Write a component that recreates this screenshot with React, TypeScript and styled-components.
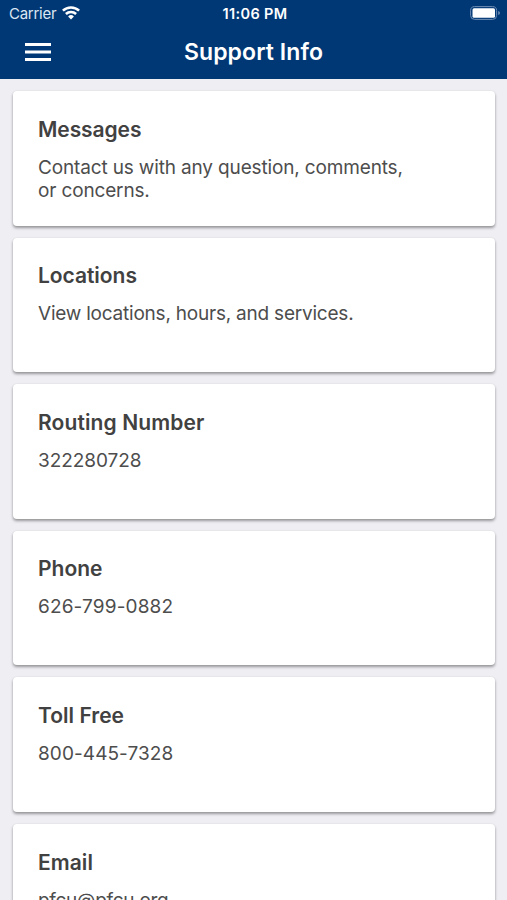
import React from "react";
import styled, { createGlobalStyle } from "styled-components";

const GlobalStyle = createGlobalStyle`
  * { box-sizing: border-box; }
  html, body { margin: 0; height: 900px; overflow: hidden; background: #eeeef3; }
  body { font-family: Inter, sans-serif; }
`;

const Screen = styled.div`
  height: 900px;
  overflow: hidden;
  background: #eeeef3;
`;

const Header = styled.header`
  height: 79px;
  background: #003876;
  color: #fff;
`;

const StatusBar = styled.div`
  display: grid;
  grid-template-columns: 1fr auto 1fr;
  align-items: center;
  height: 26px;
  padding: 0 6px 0 9px;
`;

const Label = styled.span<{ $size: number; $weight?: number; $spacing?: number }>`
  font-size: ${(p) => p.$size}px;
  font-weight: ${(p) => p.$weight ?? 400};
  letter-spacing: ${(p) => p.$spacing ?? 0}px;
  white-space: nowrap;
`;

const Carrier = styled.div`
  display: flex;
  align-items: center;
  gap: 6px;
  color: #dce6f2;
`;

const BatteryIcon = styled.svg`
  justify-self: end;
`;

const NavBar = styled.div`
  display: grid;
  grid-template-columns: 1fr auto 1fr;
  align-items: center;
  height: 52px;
  padding: 0 25px;
`;

const MenuButton = styled.button`
  display: flex;
  width: 26px;
  padding: 0;
  border: 0;
  background: none;
`;

const List = styled.main`
  display: flex;
  flex-direction: column;
  gap: 12.1px;
  padding: 12px 12.5px 0 13px;
`;

const Card = styled.section`
  flex: none;
  height: 134.5px;
  padding: 24.6px 25px 0;
  border-radius: 4px;
  background: #fff;
  box-shadow: 0 2px 3px rgba(0, 0, 0, 0.36), 0 0 2px rgba(0, 0, 0, 0.08);
`;

const Title = styled.h2<{ $spacing: number }>`
  margin: 0;
  font-size: 21px;
  font-weight: 600;
  line-height: 28px;
  color: #414141;
  letter-spacing: ${(p) => p.$spacing}px;
`;

const Detail = styled.p<{ $spacing: number }>`
  margin: 12px 0 0;
  font-size: 19px;
  line-height: 23px;
  color: #4d4d4d;
  letter-spacing: ${(p) => p.$spacing}px;
  white-space: pre-line;
`;

const items = [
  { title: "Messages", text: "Contact us with any question, comments,\nor concerns.", ts: -0.08, ds: -0.15 },
  { title: "Locations", text: "View locations, hours, and services.", ts: -0.04, ds: -0.22 },
  { title: "Routing Number", text: "322280728", ts: 0.12, ds: -0.06 },
  { title: "Phone", text: "626-799-0882", ts: 0, ds: 0.15 },
  { title: "Toll Free", text: "800-445-7328", ts: 0.02, ds: 0.08 },
  { title: "Email", text: "pfcu@pfcu.org", ts: 0.05, ds: -0.28 },
];

export default function App() {
  return (
    <Screen>
      <GlobalStyle />
      <Header>
        <StatusBar>
          <Carrier>
            <Label $size={15} $spacing={-0.27}>Carrier</Label>
            <svg width="18" height="14" viewBox="0 0 18 14" fill="none" stroke="#fff" strokeWidth="2.5">
              <path d="M.9 4.7a11.6 11.6 0 0 1 16.2 0M3.9 8a7.2 7.2 0 0 1 10.2 0" />
              <path d="M9 13.4 6.1 10.4a4.1 4.1 0 0 1 5.8 0z" fill="#fff" stroke="none" />
            </svg>
          </Carrier>
          <Label $size={14.5} $weight={600} $spacing={0.35}>11:06 PM</Label>
          <BatteryIcon width="31" height="14" viewBox="0 0 31 14">
            <rect x="0.6" y="0.6" width="26" height="12.8" rx="4" fill="none" stroke="#6f8db3" />
            <rect x="2.5" y="2.3" width="22.5" height="9.4" rx="1.5" fill="#fff" />
            <path d="M28.2 5v4q1.8-.5 1.8-2t-1.8-2" fill="#6f8db3" />
          </BatteryIcon>
        </StatusBar>
        <NavBar>
          <MenuButton aria-label="Menu">
            <svg width="26" height="18" viewBox="0 0 26 18" fill="#fff">
              <path d="M0 0h26v3H0zM0 7.5h26v3H0zM0 15h26v3H0z" />
            </svg>
          </MenuButton>
          <Label $size={23} $weight={600} $spacing={0.08}>Support Info</Label>
        </NavBar>
      </Header>
      <List>
        {items.map((i) => (
          <Card key={i.title}>
            <Title $spacing={i.ts}>{i.title}</Title>
            <Detail $spacing={i.ds}>{i.text}</Detail>
          </Card>
        ))}
      </List>
    </Screen>
  );
}
